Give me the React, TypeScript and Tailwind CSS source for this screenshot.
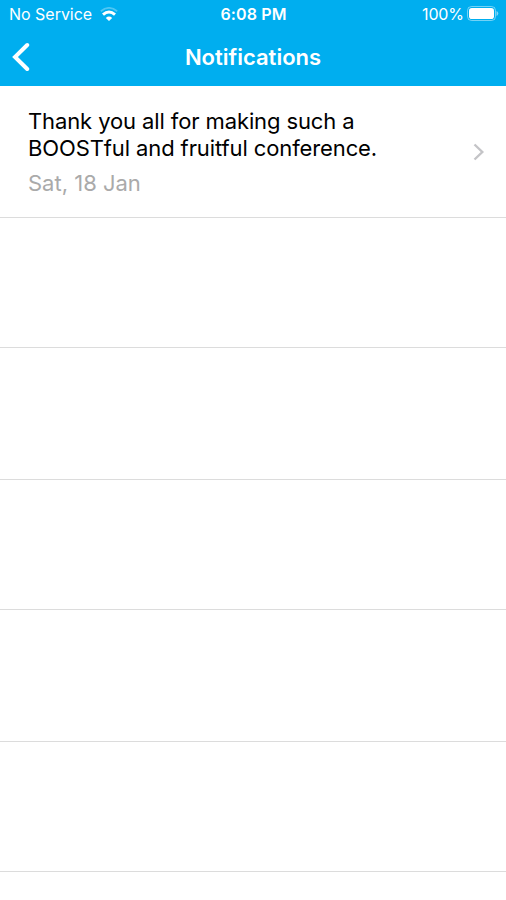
const NOTIFICATIONS = [
  {
    lines: ["Thank you all for making such a", "BOOSTful and fruitful conference."],
    date: "Sat, 18 Jan",
  },
];

const EMPTY_ROWS = [
  "h-[130px]",
  "h-[132px]",
  "h-[130px]",
  "h-[132px]",
  "h-[130px]",
];

function WifiIcon() {
  return (
    <svg viewBox="0 0 18 14" className="h-[14px] w-[18px]" fill="none" stroke="white" aria-hidden>
      <path d="M0.8 4.2 Q9 -2.4 17.2 4.2" strokeWidth="1.8" strokeOpacity="0.3" />
      <path d="M3 7.6 Q9 2.4 15 7.6" strokeWidth="3" />
      <path d="M5.8 10.9 Q9 8.2 12.2 10.9 L9 14 Z" fill="white" stroke="none" />
    </svg>
  );
}

function BatteryIcon() {
  return (
    <svg viewBox="0 0 32 15" className="mb-px h-[15px] w-[32px]" aria-hidden>
      <rect x="0.5" y="0.5" width="28" height="14" rx="4" fill="none" stroke="white" strokeOpacity="0.45" />
      <rect x="2" y="2" width="25" height="11" rx="2.8" fill="white" />
      <path d="M29.5 5 Q31.3 5.8 31.3 7.5 Q31.3 9.2 29.5 10 Z" fill="white" fillOpacity="0.5" />
    </svg>
  );
}

function BackIcon() {
  return (
    <svg viewBox="0 0 18 30" className="ml-3 h-[30px] w-[18px]" fill="none" aria-hidden>
      <path d="M15.2 3 L3 15 L15.2 27" stroke="white" strokeWidth="4" strokeLinecap="round" strokeLinejoin="miter" />
    </svg>
  );
}

function DisclosureIcon() {
  return (
    <svg viewBox="0 0 12 18" className="mr-px h-[18px] w-3" fill="none" aria-hidden>
      <path d="M1.5 1.5 L9.3 9 L1.5 16.5" stroke="#c4c4c7" strokeWidth="2.4" />
    </svg>
  );
}

function Header() {
  return (
    <header className="h-[86px] bg-[#00aeef] text-white">
      <div className="grid h-[28px] grid-cols-3 items-center pl-[9px] pr-[7px] text-[16px]">
        <div className="flex items-center gap-2 whitespace-nowrap">
          <span className="tracking-[-0.02px]">No Service</span>
          <WifiIcon />
        </div>
        <span className="-ml-px text-center font-semibold tracking-[0.12px]">6:08 PM</span>
        <div className="flex items-center justify-end gap-[3px]">
          <span className="tracking-[-0.1px]">100%</span>
          <BatteryIcon />
        </div>
      </div>
      <div className="grid h-[58px] grid-cols-[60px_1fr_60px] items-center">
        <BackIcon />
        <h1 className="text-center text-[22px] font-semibold">Notifications</h1>
      </div>
    </header>
  );
}

export default function App() {
  return (
    <div className="h-[900px] w-[506px] overflow-hidden bg-white font-['Inter',sans-serif]">
      <Header />
      {NOTIFICATIONS.map(({ lines, date }) => (
        <div
          key={date}
          className="flex h-[132px] items-center justify-between border-b border-[#dcdcdc] pl-7 pr-5"
        >
          <div className="pt-[4px]">
            {lines.map((line) => (
              <p key={line} className="whitespace-nowrap text-[22px] leading-[27px] tracking-[-0.11px] text-black">
                {line}
              </p>
            ))}
            <p className="mt-1 text-[22px] leading-[34px] text-[#aaaaaa]">{date}</p>
          </div>
          <DisclosureIcon />
        </div>
      ))}
      {EMPTY_ROWS.map((height, i) => (
        <div key={i} className={`${height} border-b border-[#dcdcdc]`} />
      ))}
    </div>
  );
}
